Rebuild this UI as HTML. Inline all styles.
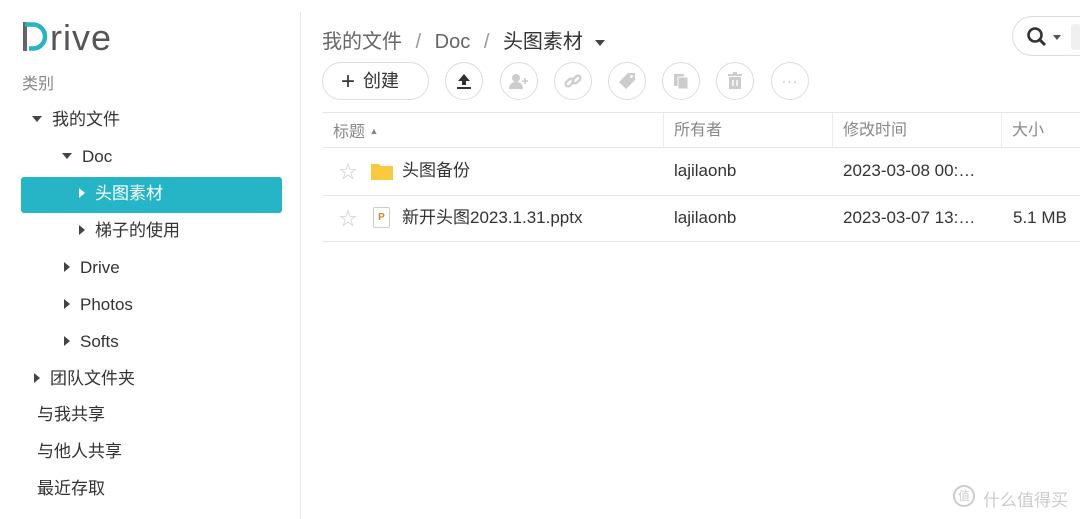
<!DOCTYPE html><html><head><meta charset="utf-8"><style>
*{margin:0;padding:0;box-sizing:border-box}
body{width:1080px;height:519px;overflow:hidden;background:#fff;font-family:"Liberation Sans","Noto Sans CJK SC",sans-serif;color:#333;position:relative}
.a{position:absolute;white-space:nowrap}
.side{position:absolute;left:0;top:12px;width:301px;height:507px;border-right:1px solid #e6e6e6}
.it{position:absolute;font-size:17px;color:#333;line-height:20px}
.tri{display:inline-block;width:0;height:0;margin-right:10px;vertical-align:middle;position:relative;top:-2px}
.dn{border-left:5px solid transparent;border-right:5px solid transparent;border-top:6px solid #444}
.rt{border-top:5px solid transparent;border-bottom:5px solid transparent;border-left:6px solid #444}
.c{position:absolute;top:62px;width:38px;height:38px;border:1px solid #ddd;border-radius:50%;display:flex;align-items:center;justify-content:center}
.hl{position:absolute;left:322px;width:758px;height:1px;background:#e6e6e6}
.vl{position:absolute;top:113px;height:34px;width:1px;background:#ececec}
.star{position:absolute;font-size:18px;line-height:20px;color:#ccc}
</style></head><body>
<div class="side"></div>
<svg class="a" style="left:23px;top:20px" width="26" height="32"><rect x="0" y="2" width="4" height="29" fill="#666"/><path d="M2 2h8a12 12 0 0 1 0 24h-4" fill="none" stroke="#27b4c4" stroke-width="4.5" transform="translate(0,2.5)"/></svg>
<div class="a" style="left:50px;top:18px;font-size:36px;color:#555;letter-spacing:1px;line-height:40px">rive</div>
<div class="it" style="left:22px;top:75px;color:#888;font-size:16px">类别</div>
<div class="it" style="left:32px;top:110px"><span class="tri dn"></span>我的文件</div>
<div class="it" style="left:62px;top:147px"><span class="tri dn"></span>Doc</div>
<div class="a" style="left:21px;top:177px;width:261px;height:36px;background:#25b5c6;border-radius:3px"></div>
<div class="it" style="left:79px;top:184px;color:#fff"><span class="tri rt" style="border-left-color:#fff"></span>头图素材</div>
<div class="it" style="left:79px;top:221px"><span class="tri rt"></span>梯子的使用</div>
<div class="it" style="left:64px;top:258px"><span class="tri rt"></span>Drive</div>
<div class="it" style="left:64px;top:295px"><span class="tri rt"></span>Photos</div>
<div class="it" style="left:64px;top:332px"><span class="tri rt"></span>Softs</div>
<div class="it" style="left:34px;top:369px"><span class="tri rt"></span>团队文件夹</div>
<div class="it" style="left:37px;top:405px">与我共享</div>
<div class="it" style="left:37px;top:442px">与他人共享</div>
<div class="it" style="left:37px;top:479px">最近存取</div>

<div class="a" style="left:322px;top:25px;font-size:20px;color:#666">我的文件 <span style="color:#999;margin:0 8px">/</span> Doc <span style="color:#999;margin:0 8px">/</span> <span style="color:#333">头图素材</span> <span style="display:inline-block;border-left:5px solid transparent;border-right:5px solid transparent;border-top:6px solid #444;vertical-align:middle;margin-left:6px"></span></div>
<div class="a" style="left:1012px;top:16px;width:90px;height:40px;border:1px solid #ddd;border-radius:20px"></div>
<svg class="a" style="left:1026px;top:26px" width="22" height="22" viewBox="0 0 22 22"><circle cx="9" cy="9" r="6.5" fill="none" stroke="#333" stroke-width="2.6"/><path d="M13.5 13.5L19 19" stroke="#333" stroke-width="3"/></svg>
<div class="a" style="left:1053px;top:35px;border-left:4px solid transparent;border-right:4px solid transparent;border-top:5px solid #555"></div>
<div class="a" style="left:1071px;top:24px;width:10px;height:26px;background:#f0f0f0;border-radius:3px"></div>

<div class="a" style="left:322px;top:62px;width:107px;height:38px;border:1px solid #ddd;border-radius:19px;font-size:18px;line-height:36px;padding-left:18px;color:#333"><span style="font-size:24px;vertical-align:-2px;margin-right:8px">+</span>创建</div>
<div class="c" style="left:445px"><svg width="18" height="18"><path d="M9 2L3 9h4v4h4V9h4z" fill="#333"/><rect x="2" y="15" width="14" height="2" fill="#333"/></svg></div>
<div class="c" style="left:500px"><svg width="22" height="18"><circle cx="8" cy="6" r="4" fill="#ccc"/><path d="M1 17c0-5 3-7 7-7s7 2 7 7z" fill="#ccc"/><path d="M17 6v6M14 9h6" stroke="#ccc" stroke-width="1.6"/></svg></div>
<div class="c" style="left:554px"><svg width="20" height="20"><g fill="none" stroke="#ccc" stroke-width="2.2"><rect x="2" y="9" width="9" height="5" rx="2.5" transform="rotate(-45 6.5 11.5)"/><rect x="9" y="6" width="9" height="5" rx="2.5" transform="rotate(-45 13.5 8.5)"/></g></svg></div>
<div class="c" style="left:608px"><svg width="20" height="20"><path d="M11 2h7v7l-9 9-7-7z" fill="#ccc"/><circle cx="14.5" cy="5.5" r="1.5" fill="#fff"/></svg></div>
<div class="c" style="left:662px"><svg width="18" height="18"><rect x="2" y="2" width="10" height="12" fill="#ccc"/><rect x="6" y="5" width="10" height="12" fill="#ccc" stroke="#fff" stroke-width="1"/></svg></div>
<div class="c" style="left:716px"><svg width="16" height="18"><rect x="1" y="2" width="14" height="2" fill="#ccc"/><rect x="6" y="0" width="4" height="2" fill="#ccc"/><path d="M2 5h12v12H2z" fill="#ccc"/><path d="M6 8v6M10 8v6" stroke="#fff" stroke-width="1.4"/></svg></div>
<div class="c" style="left:771px;color:#bbb;font-size:14px;letter-spacing:1px">···</div>

<div class="hl" style="top:112px"></div>
<div class="hl" style="top:147px"></div>
<div class="hl" style="top:195px"></div>
<div class="hl" style="top:241px"></div>
<div class="vl" style="left:663px"></div><div class="vl" style="left:832px"></div><div class="vl" style="left:1001px"></div>
<div class="a" style="left:333px;top:121px;font-size:16px;line-height:20px;color:#888">标题 <span style="font-size:9px;vertical-align:3px">▲</span></div>
<div class="a" style="left:674px;top:121px;font-size:16px;line-height:20px;color:#888">所有者</div>
<div class="a" style="left:843px;top:121px;font-size:16px;line-height:20px;color:#888">修改时间</div>
<div class="a" style="left:1012px;top:121px;font-size:16px;line-height:20px;color:#888">大小</div>

<div class="star" style="left:339px;top:162px">☆</div>
<svg class="a" style="left:371px;top:162px" width="22" height="18"><path d="M0 2h8l2 2h12v14H0z" fill="#fbc93d"/></svg>
<div class="a" style="left:402px;top:161px;font-size:17px;line-height:20px">头图备份</div>
<div class="a" style="left:674px;top:161px;font-size:17px;line-height:20px">lajilaonb</div>
<div class="a" style="left:843px;top:161px;font-size:17px;line-height:20px">2023-03-08 00:…</div>

<div class="star" style="left:339px;top:209px">☆</div>
<div class="a" style="left:373px;top:207px;width:17px;height:21px;border:1px solid #ccc;border-radius:2px;font-size:10px;font-weight:bold;color:#d9822b;text-align:center;line-height:19px">P</div>
<div class="a" style="left:402px;top:208px;font-size:17px;line-height:20px">新开头图2023.1.31.pptx</div>
<div class="a" style="left:674px;top:208px;font-size:17px;line-height:20px">lajilaonb</div>
<div class="a" style="left:843px;top:208px;font-size:17px;line-height:20px">2023-03-07 13:…</div>
<div class="a" style="left:1013px;top:208px;font-size:17px;line-height:20px">5.1 MB</div>

<div class="a" style="left:953px;top:485px;width:22px;height:22px;border:2px solid #ccc;border-radius:50%;font-size:12px;color:#ccc;text-align:center;line-height:18px">值</div>
<div class="a" style="left:983px;top:486px;font-size:17px;color:#ccc">什么值得买</div>
</body></html>
